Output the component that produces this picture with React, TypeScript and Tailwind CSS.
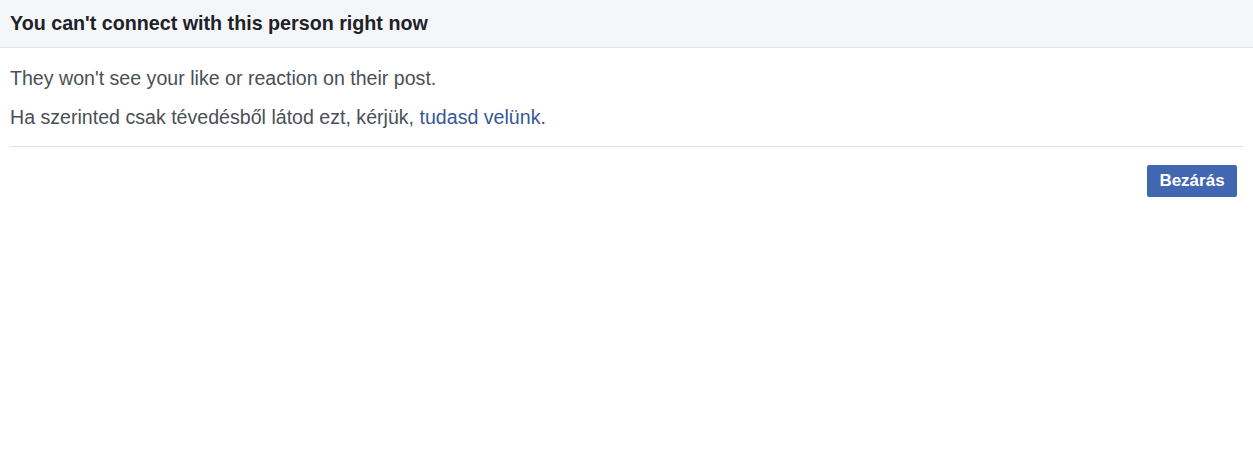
export default function App() {
  return (
    <div className="w-[1253px] h-[460px] bg-white font-['Liberation_Sans',Arial,sans-serif]">
      <div className="h-[48px] bg-[#f5f6f7] border-b border-[#e5e5e5] px-[10px] flex items-center">
        <h1 className="text-[19.7px] font-bold text-[#1d2129] leading-none">
          You can't connect with this person right now
        </h1>
      </div>
      <div className="px-[10px]">
        <div className="pt-[18px] pb-[18px] border-b border-[#dddfe2] text-[19.6px] text-[#4b4f56] leading-[22px]">
          <p className="pt-[1px]">They won't see your like or reaction on their post.</p>
          <p className="mt-[17px]">
            Ha szerinted csak tévedésből látod ezt, kérjük,{" "}
            <a href="#" className="text-[#365899]">tudasd velünk</a>.
          </p>
        </div>
        <div className="flex justify-end pt-[18px] pr-[6px]">
          <button className="h-[32px] w-[90px] rounded-[2px] bg-[#4267b2] border border-[#4267b2] text-white text-[17px] font-bold">
            Bezárás
          </button>
        </div>
      </div>
    </div>
  );
}
